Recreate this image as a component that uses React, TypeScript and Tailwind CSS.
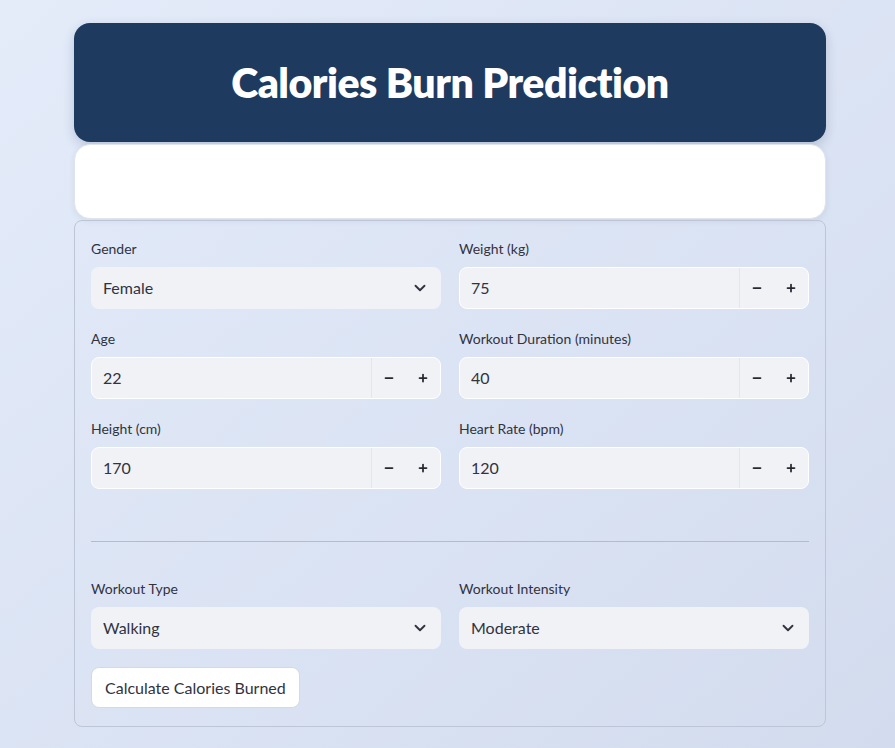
import { ChevronDown, Minus, Plus } from "lucide-react";

type FieldProps = { label: string; value: string };

function SelectField({ label, value }: FieldProps) {
  return (
    <div className="flex flex-col">
      <label className="text-[14px] leading-[18px] text-[#31333f] mb-[9px] h-[18px]">{label}</label>
      <div className="h-[42px] rounded-lg bg-[#f0f2f6] flex items-center justify-between pl-3 pr-3">
        <span className="text-[16px] text-[#31333f]">{value}</span>
        <ChevronDown size={18} strokeWidth={2.5} className="text-[#31333f]" />
      </div>
    </div>
  );
}

function NumberField({ label, value }: FieldProps) {
  return (
    <div className="flex flex-col">
      <label className="text-[14px] leading-[18px] text-[#31333f] mb-[9px] h-[18px]">{label}</label>
      <div className="h-[42px] rounded-lg bg-[#f0f2f6] border border-white flex items-center">
        <span className="flex-1 pl-[11px] text-[16px] text-[#31333f]">{value}</span>
        <div className="flex h-full border-l border-[#e4e6eb]">
          <button className="w-[34px] flex items-center justify-center text-[#262730]">
            <Minus size={12} strokeWidth={3.5} />
          </button>
          <button className="w-[34px] flex items-center justify-center text-[#262730]">
            <Plus size={12} strokeWidth={3.5} />
          </button>
        </div>
      </div>
    </div>
  );
}

export default function App() {
  return (
    <div
      className="min-h-[748px] w-full bg-gradient-to-br from-[#e4ecfa] to-[#d3dcee] pt-[23px] pb-[22px]"
      style={{ fontFamily: '"Source Sans Pro", "Lato", "Noto Sans", sans-serif' }}
    >
      <div className="w-[752px] ml-[74px] flex flex-col">
        {/* Header */}
        <div className="h-[119px] rounded-2xl bg-[#1f3a5f] shadow-[0_4px_12px_rgba(30,50,90,0.2)] flex items-center justify-center">
          <h1 className="text-white text-[41px] font-extrabold tracking-[-0.5px]">Calories Burn Prediction</h1>
        </div>

        {/* Empty white card */}
        <div className="mt-[2px] h-[75px] rounded-2xl bg-white border border-[#dfe5ef] shadow-[0_2px_6px_rgba(30,50,90,0.08)]" />

        {/* Form */}
        <div className="mt-[1px] rounded-lg border border-[#bcc6d6] px-4 pt-[19px] pb-[18px]">
          <div className="grid grid-cols-2 gap-x-[18px] gap-y-[21px]">
            <SelectField label="Gender" value="Female" />
            <NumberField label="Weight (kg)" value="75" />
            <NumberField label="Age" value="22" />
            <NumberField label="Workout Duration (minutes)" value="40" />
            <NumberField label="Height (cm)" value="170" />
            <NumberField label="Heart Rate (bpm)" value="120" />
          </div>

          <div className="mt-[52px] mb-[38px] border-t border-[#b3bccc]" />

          <div className="grid grid-cols-2 gap-x-[18px]">
            <SelectField label="Workout Type" value="Walking" />
            <SelectField label="Workout Intensity" value="Moderate" />
          </div>

          <button className="mt-[18px] h-[41px] px-[13px] rounded-lg bg-white border border-[#d5d9e0] text-[16px] text-[#31333f]">
            Calculate Calories Burned
          </button>
        </div>
      </div>
    </div>
  );
}
